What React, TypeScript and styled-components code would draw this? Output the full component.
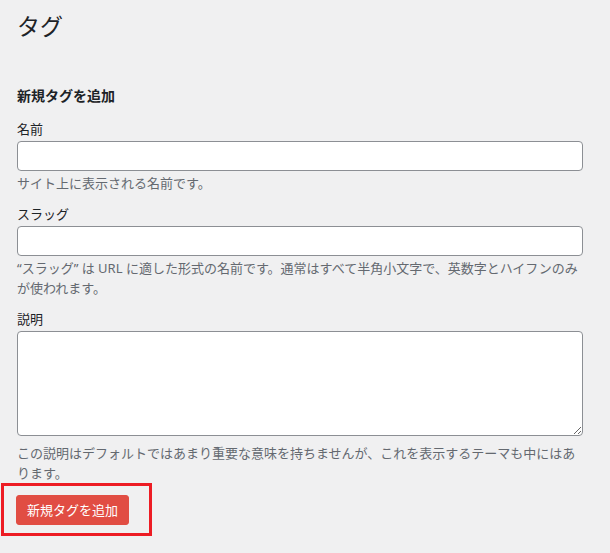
import React from "react";
import styled, { createGlobalStyle } from "styled-components";

const GlobalStyle = createGlobalStyle`
  html, body {
    margin: 0;
    padding: 0;
    background: #f0f0f1;
  }
  body {
    font-family: "Noto Sans", "Noto Sans CJK JP", sans-serif;
    font-size: 13px;
    color: #1d2327;
    min-height: 553px;
  }
`;

const Wrap = styled.div`
  padding: 11px 0 30px 17px;
  width: 566px;
`;

const Title = styled.h1`
  margin: 0;
  font-size: 23px;
  line-height: 30px;
  font-weight: 400;
  color: #1d2327;
`;

const SectionHeading = styled.h2`
  margin: 45px 0 0;
  font-size: 14px;
  line-height: 20px;
  font-weight: 700;
  color: #1d2327;
`;

const Form = styled.form`
  display: flex;
  flex-direction: column;
  margin-top: 14px;
`;

const Field = styled.div`
  display: flex;
  flex-direction: column;
  margin-bottom: 12px;
`;

const Label = styled.label`
  font-size: 13px;
  line-height: 18px;
  margin-bottom: 3px;
  color: #1d2327;
`;

const TextInput = styled.input`
  box-sizing: border-box;
  width: 566px;
  height: 30px;
  margin: 0;
  padding: 0 8px;
  border: 1px solid #8c8f94;
  border-radius: 4px;
  background: #fff;
  font: inherit;
  outline: none;
`;

const TextArea = styled.textarea`
  box-sizing: border-box;
  width: 566px;
  height: 105px;
  margin: 0 0 5px;
  padding: 2px 6px;
  border: 1px solid #8c8f94;
  border-radius: 4px;
  background: #fff;
  font: inherit;
  outline: none;
  resize: vertical;
`;

const Description = styled.p`
  margin: 2px 0 0;
  font-size: 13px;
  line-height: 20px;
  color: #646970;
`;

const SubmitArea = styled.div`
  position: relative;
  align-self: flex-start;
  margin-left: -1px;
`;

const Highlight = styled.div`
  position: absolute;
  top: -12px;
  left: -15px;
  right: -23px;
  bottom: -11px;
  border: 3px solid #ed1c24;
  pointer-events: none;
`;

const PrimaryButton = styled.button`
  display: block;
  box-sizing: border-box;
  height: 30px;
  margin: 0;
  padding: 0 10px;
  border: 1px solid #e14d43;
  border-radius: 3px;
  background: #e14d43;
  color: #fff;
  font-family: inherit;
  font-size: 13px;
  line-height: 28px;
  cursor: pointer;
`;

export default function App() {
  return (
    <>
      <GlobalStyle />
      <Wrap>
        <Title>タグ</Title>
        <SectionHeading>新規タグを追加</SectionHeading>
        <Form onSubmit={(e) => e.preventDefault()}>
          <Field>
            <Label htmlFor="tag-name">名前</Label>
            <TextInput id="tag-name" type="text" />
            <Description>サイト上に表示される名前です。</Description>
          </Field>
          <Field>
            <Label htmlFor="tag-slug">スラッグ</Label>
            <TextInput id="tag-slug" type="text" />
            <Description>
              “スラッグ” は URL に適した形式の名前です。通常はすべて半角小文字で、英数字とハイフンのみが使われます。
            </Description>
          </Field>
          <Field>
            <Label htmlFor="tag-description">説明</Label>
            <TextArea id="tag-description" />
            <Description>
              この説明はデフォルトではあまり重要な意味を持ちませんが、これを表示するテーマも中にはあります。
            </Description>
          </Field>
          <SubmitArea>
            <PrimaryButton type="submit">新規タグを追加</PrimaryButton>
            <Highlight />
          </SubmitArea>
        </Form>
      </Wrap>
    </>
  );
}
